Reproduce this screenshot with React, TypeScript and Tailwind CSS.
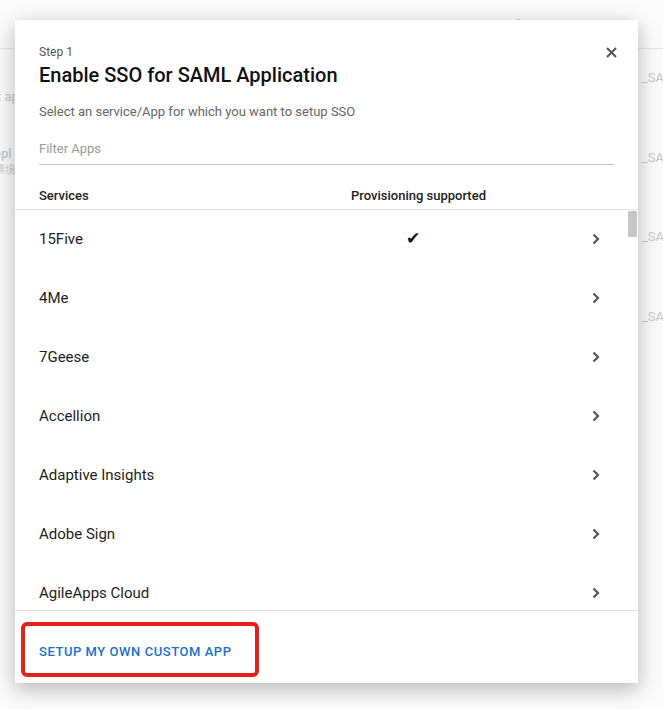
const apps = [
  { name: '15Five', provisioning: true },
  { name: '4Me', provisioning: false },
  { name: '7Geese', provisioning: false },
  { name: 'Accellion', provisioning: false },
  { name: 'Adaptive Insights', provisioning: false },
  { name: 'Adobe Sign', provisioning: false },
  { name: 'AgileApps Cloud', provisioning: false },
  { name: 'Aha!', provisioning: false },
]

function Chevron() {
  return (
    <svg width="8" height="12" viewBox="0 0 8 12" fill="none">
      <path d="M1.5 1.5L6 6l-4.5 4.5" stroke="#555" strokeWidth="2.2" />
    </svg>
  )
}

function CloseIcon() {
  return (
    <svg width="11" height="11" viewBox="0 0 11 11" fill="none">
      <path d="M1 1l9 9M10 1l-9 9" stroke="#555" strokeWidth="2" />
    </svg>
  )
}

function BackgroundPage() {
  return (
    <div className="absolute inset-0 text-[13px] text-[#c9c9c9]">
      <div className="flex h-[49px] items-center border-b border-[#e6e6e6] pt-[2px]">
        <span className="ml-[187px] w-[300px]">Status ▲</span>
        <span>Certificate</span>
      </div>
      <div className="absolute left-[642px] top-[68px] flex flex-col gap-[60px]">
        <span>_SAML</span>
        <span>_SAML</span>
        <span>_SAML</span>
        <span>_SAML</span>
      </div>
      <div className="absolute left-[-3px] top-[87px]">t ap</div>
      <div className="absolute left-[-6px] top-[146px] leading-[16px] font-medium">
        <div>epl</div>
        <div className="text-[11px]">環境</div>
      </div>
    </div>
  )
}

export default function App() {
  return (
    <div className="relative h-[709px] w-[663px] overflow-hidden bg-[#fbfbfb] font-['Roboto',sans-serif]">
      <BackgroundPage />
      <div className="absolute left-[15px] top-[20px] flex h-[663px] w-[623px] flex-col bg-white shadow-[0_6px_20px_rgba(0,0,0,0.28)]">
        <div className="relative px-[24px] pt-[24px]">
          <div className="text-[12px] leading-[16px] text-[#555]">Step 1</div>
          <h2 className="mt-[2px] text-[20px] font-medium leading-[26px] text-[#111]">
            Enable SSO for SAML Application
          </h2>
          <p className="mt-[15px] text-[13px] leading-[18px] text-[#666]">
            Select an service/App for which you want to setup SSO
          </p>
          <input
            placeholder="Filter Apps"
            className="mt-[11px] h-[33px] w-full border-b border-[#c4c4c4] text-[13px] text-[#333] outline-none placeholder:text-[#9a9a9a]"
          />
          <button className="absolute right-[21px] top-[27px]">
            <CloseIcon />
          </button>
        </div>

        <div className="flex h-[45px] items-end border-b border-[#e4e4e4] px-[24px] pb-[4px] text-[13px] font-medium leading-[18px] text-[#222]">
          <span className="w-[312px]">Services</span>
          <span>Provisioning supported</span>
        </div>

        <div className="relative flex-1 overflow-hidden">
          {apps.map((app) => (
            <div
              key={app.name}
              className="flex h-[59px] items-center pl-[24px] pr-[38px] text-[15px] text-[#1e1e1e]"
            >
              <span className="w-[312px]">{app.name}</span>
              <span className="-mt-[3px] w-[136px] pl-[55px] font-['DejaVu_Sans',sans-serif] text-[17px] leading-none text-[#111]">
                {app.provisioning ? '✔' : ''}
              </span>
              <span className="ml-auto -mt-[2px] flex">
                <Chevron />
              </span>
            </div>
          ))}
          <div className="absolute right-[1px] top-[1px] h-[26px] w-[9px] rounded-[1px] bg-[#c6c6c6]" />
        </div>

        <div className="relative flex h-[73px] items-center border-t border-[#e4e4e4] px-[24px] pt-[10px]">
          <button className="text-[13px] font-medium uppercase tracking-[0.55px] text-[#1a6fd0]">
            Setup my own custom app
          </button>
          <div className="pointer-events-none absolute left-[6px] top-[11px] h-[55px] w-[238px] rounded-[6px] border-[4px] border-[#e5211b]" />
        </div>
      </div>
    </div>
  )
}
